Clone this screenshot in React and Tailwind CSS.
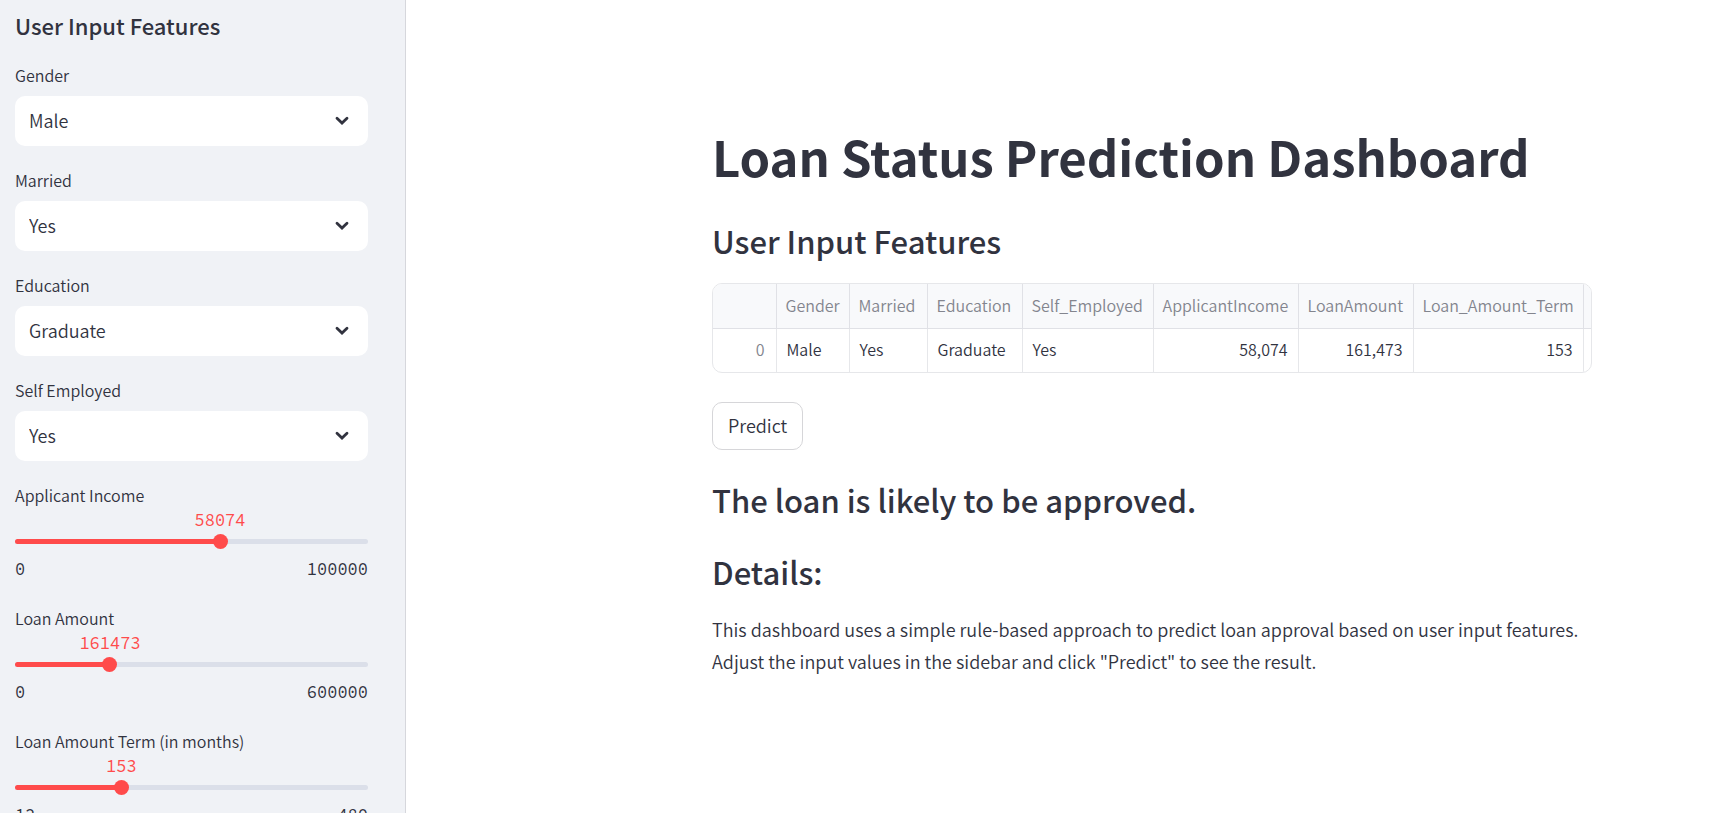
import { useId, useState } from "react";

const sans = "font-['Source_Sans_Pro','Noto_Sans_CJK_SC',sans-serif]";
const mono = "font-['Source_Code_Pro','Liberation_Mono',monospace] font-normal";

function SelectField({ label, options, value, onChange }) {
  const id = useId();
  return (
    <div className="flex flex-col">
      <label htmlFor={id} className="text-base leading-[26px]">
        {label}
      </label>
      <div className="relative mt-2">
        <select
          id={id}
          value={value}
          onChange={(e) => onChange(e.target.value)}
          className="block h-[50px] w-full appearance-none rounded-[10px] bg-white pr-12 pb-0.5 pl-3.5 text-lg outline-none focus-visible:ring-1 focus-visible:ring-[#ff4b4b]"
        >
          {options.map((option) => (
            <option key={option}>{option}</option>
          ))}
        </select>
        <svg
          aria-hidden="true"
          viewBox="0 0 14 9"
          className="pointer-events-none absolute top-[20px] right-[19px] h-[9px] w-[14px]"
          fill="none"
          stroke="currentColor"
          strokeWidth="2.8"
          strokeLinecap="round"
          strokeLinejoin="miter"
        >
          <path d="M2 2.2l5 4.8L12 2.2" />
        </svg>
      </div>
    </div>
  );
}

function SliderField({ label, min, max, value, onChange }) {
  const id = useId();
  const percent = `${((value - min) / (max - min)) * 100}%`;
  return (
    <div className="flex flex-col pb-[5px]">
      <label htmlFor={id} className="text-base leading-[26px]">
        {label}
      </label>
      <div className={`relative mt-0.5 h-5 text-[17px] leading-5 text-[#ff4b4b] ${mono}`}>
        <output htmlFor={id} className="absolute -translate-x-1/2" style={{ left: percent }}>
          {value}
        </output>
      </div>
      <div className="relative mt-1 flex h-[15px] items-center">
        <div className="h-[5px] w-full overflow-hidden rounded-full bg-[#dbdfe9]">
          <div className="h-full bg-[#ff4b4b]" style={{ width: percent }} />
        </div>
        <input
          id={id}
          type="range"
          min={min}
          max={max}
          value={value}
          onChange={(e) => onChange(Number(e.target.value))}
          className="absolute inset-y-0 -left-2 h-[15px] w-[calc(100%+16px)] cursor-pointer appearance-none bg-transparent outline-none [&::-webkit-slider-thumb]:size-[15px] [&::-webkit-slider-thumb]:appearance-none [&::-webkit-slider-thumb]:rounded-full [&::-webkit-slider-thumb]:bg-[#ff4b4b]"
        />
      </div>
      <div className={`mt-2.5 flex justify-between text-[17px] leading-5 ${mono}`}>
        <span>{min}</span>
        <span>{max}</span>
      </div>
    </div>
  );
}

function FeatureTable({ columns }) {
  return (
    <div className="overflow-hidden rounded-[10px] border border-[#e6e7ea]">
      <table className="w-full table-fixed border-collapse text-base leading-6">
        <colgroup>
          <col className="w-[63px]" />
          {columns.map((c) => (
            <col key={c.name} className={c.width} />
          ))}
          <col />
        </colgroup>
        <thead>
          <tr className="h-11 border-b border-[#e0e1e6] bg-[#f8f9fb] text-[#83858e]">
            <th className="border-r border-[#e0e1e6]" />
            {columns.map((c) => (
              <th
                key={c.name}
                scope="col"
                className="border-r border-[#e0e1e6] px-[9px] pb-0.5 text-left font-[350] whitespace-nowrap"
              >
                {c.name}
              </th>
            ))}
            <th />
          </tr>
        </thead>
        <tbody>
          <tr className="h-11">
            <th scope="row" className="border-r border-[#e6e7ea] px-[11px] pb-0.5 text-right font-[350] text-[#83858e]">
              0
            </th>
            {columns.map((c) => (
              <td
                key={c.name}
                className={`border-r border-[#e6e7ea] px-2.5 pb-0.5 whitespace-nowrap ${typeof c.value === "number" ? "text-right" : "text-left"}`}
              >
                {typeof c.value === "number" ? c.value.toLocaleString("en-US") : c.value}
              </td>
            ))}
            <td />
          </tr>
        </tbody>
      </table>
    </div>
  );
}

export default function App() {
  const [gender, setGender] = useState("Male");
  const [married, setMarried] = useState("Yes");
  const [education, setEducation] = useState("Graduate");
  const [selfEmployed, setSelfEmployed] = useState("Yes");
  const [income, setIncome] = useState(58074);
  const [amount, setAmount] = useState(161473);
  const [term, setTerm] = useState(153);

  const columns = [
    { name: "Gender", value: gender, width: "w-[73px]" },
    { name: "Married", value: married, width: "w-[78px]" },
    { name: "Education", value: education, width: "w-[95px]" },
    { name: "Self_Employed", value: selfEmployed, width: "w-[131px]" },
    { name: "ApplicantIncome", value: income, width: "w-[145px]" },
    { name: "LoanAmount", value: amount, width: "w-[115px]" },
    { name: "Loan_Amount_Term", value: term, width: "w-[170px]" },
  ];

  return (
    <div className={`flex h-screen bg-white font-[350] text-[#31333f] ${sans}`}>
      <aside className="w-[406px] shrink-0 overflow-y-auto border-r border-[#d6d7dc] bg-[#f0f2f6] pt-2.5 pr-[37px] pl-[15px] [scrollbar-width:none]">
        <h2 className="text-[22px] leading-[30px] font-medium">User Input Features</h2>
        <div className="mt-[22px] flex flex-col gap-[21px] pb-8">
          <SelectField label="Gender" options={["Male", "Female"]} value={gender} onChange={setGender} />
          <SelectField label="Married" options={["Yes", "No"]} value={married} onChange={setMarried} />
          <SelectField label="Education" options={["Graduate", "Not Graduate"]} value={education} onChange={setEducation} />
          <SelectField label="Self Employed" options={["Yes", "No"]} value={selfEmployed} onChange={setSelfEmployed} />
          <SliderField label="Applicant Income" min={0} max={100000} value={income} onChange={setIncome} />
          <SliderField label="Loan Amount" min={0} max={600000} value={amount} onChange={setAmount} />
          <SliderField label="Loan Amount Term (in months)" min={12} max={480} value={term} onChange={setTerm} />
        </div>
      </aside>

      <main className="flex min-w-0 flex-1 justify-center overflow-y-auto pt-[122px] pl-[183px] [scrollbar-width:none]">
        <div className="w-full max-w-[880px]">
          <h1 className="text-[49px] leading-[68px] font-bold">Loan Status Prediction Dashboard</h1>
          <h2 className="mt-7 text-[31px] leading-[46px] font-medium">User Input Features</h2>
          <div className="mt-[19px]">
            <FeatureTable columns={columns} />
          </div>
          <button
            type="button"
            className="mt-[29px] h-12 rounded-[10px] border border-[#d6d6d9] bg-white px-[15px] pb-0.5 text-lg hover:border-[#ff4b4b] hover:text-[#ff4b4b]"
          >
            Predict
          </button>
          <h2 className="mt-[27px] text-[31px] leading-[46px] font-medium">The loan is likely to be approved.</h2>
          <h2 className="mt-[26px] text-[31px] leading-[46px] font-medium">Details:</h2>
          <p className="mt-[18px] text-lg leading-8">
            This dashboard uses a simple rule-based approach to predict loan approval based on user input features.
            Adjust the input values in the sidebar and click "Predict" to see the result.
          </p>
        </div>
      </main>
    </div>
  );
}
